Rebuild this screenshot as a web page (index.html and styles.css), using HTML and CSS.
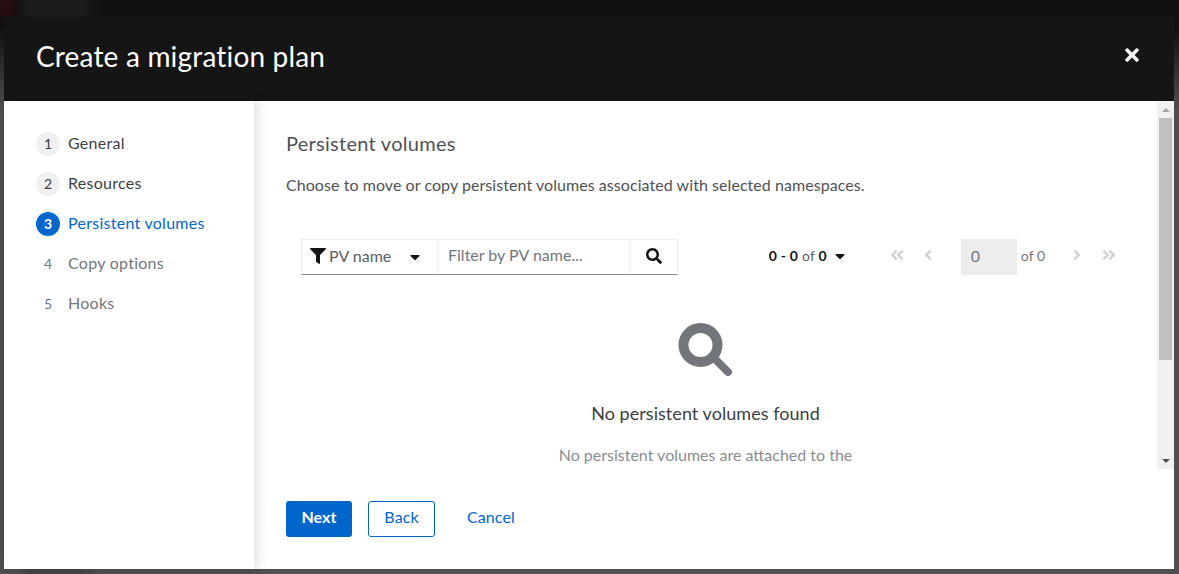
FILE: index.html
```html
<!DOCTYPE html>
<html lang="en">
<head>
<meta charset="utf-8">
<title>Create a migration plan</title>
<link rel="stylesheet" href="styles.css">
</head>
<body>
<div class="modal">
  <header class="modal-head">
    <h1 class="modal-title">Create a migration plan</h1>
    <svg class="close-icon" viewBox="0 0 352 512"><path d="M242.72 256l100.07-100.07c12.28-12.28 12.28-32.19 0-44.48l-22.24-22.24c-12.28-12.28-32.19-12.28-44.48 0L176 189.28 75.93 89.21c-12.28-12.28-32.19-12.28-44.48 0L9.21 111.45c-12.28 12.28-12.28 32.19 0 44.48L109.28 256 9.21 356.07c-12.28 12.28-12.28 32.19 0 44.48l22.24 22.24c12.28 12.28 32.2 12.28 44.48 0L176 322.72l100.07 100.07c12.28 12.28 32.2 12.28 44.48 0l22.24-22.24c12.28-12.28 12.28-32.19 0-44.48L242.72 256z"/></svg>
  </header>
  <div class="modal-body">
    <nav class="steps">
      <div class="step"><span class="step-num done">1</span><span class="step-label">General</span></div>
      <div class="step"><span class="step-num done">2</span><span class="step-label">Resources</span></div>
      <div class="step current"><span class="step-num">3</span><span class="step-label">Persistent volumes</span></div>
      <div class="step muted"><span class="step-num">4</span><span class="step-label">Copy options</span></div>
      <div class="step muted"><span class="step-num">5</span><span class="step-label">Hooks</span></div>
    </nav>
    <div class="main">
      <div class="scroll-row">
        <section class="content">
          <h2 class="page-title">Persistent volumes</h2>
          <p class="page-desc">Choose to move or copy persistent volumes associated with selected namespaces.</p>
          <div class="toolbar">
            <div class="filter">
              <div class="filter-select">
                <svg class="filter-icon" viewBox="0 0 512 512"><path d="M487.976 0H24.028C2.71 0-8.047 25.866 7.058 40.971L192 225.941V432c0 7.831 3.821 15.17 10.237 19.662l80 55.98C298.02 518.69 320 507.493 320 487.98V225.941l184.947-184.97C520.021 25.896 509.338 0 487.976 0z"/></svg>
                <span class="filter-label">PV name</span>
                <svg class="caret" viewBox="0 0 320 512"><path d="M31.3 192h257.3c17.8 0 26.7 21.5 14.1 34.1L174.1 354.8c-7.8 7.8-20.5 7.8-28.3 0L17.2 226.1C4.6 213.5 13.5 192 31.3 192z"/></svg>
              </div>
              <div class="filter-input">Filter by PV name...</div>
              <div class="filter-btn">
                <svg class="search-small" viewBox="0 0 512 512"><path d="M505 442.7L405.3 343c-4.5-4.5-10.6-7-17-7H372c27.6-35.3 44-79.7 44-128C416 93.1 322.9 0 208 0S0 93.1 0 208s93.1 208 208 208c48.3 0 92.7-16.4 128-44v16.3c0 6.4 2.5 12.5 7 17l99.7 99.7c9.4 9.4 24.6 9.4 33.9 0l28.3-28.3c9.4-9.4 9.4-24.6.1-34zM208 336c-70.7 0-128-57.2-128-128 0-70.7 57.2-128 128-128 70.7 0 128 57.2 128 128 0 70.7-57.2 128-128 128z"/></svg>
              </div>
            </div>
            <div class="pager">
              <span class="pager-count"><b>0 - 0</b> of <b>0</b></span>
              <svg class="caret pager-caret" viewBox="0 0 320 512"><path d="M31.3 192h257.3c17.8 0 26.7 21.5 14.1 34.1L174.1 354.8c-7.8 7.8-20.5 7.8-28.3 0L17.2 226.1C4.6 213.5 13.5 192 31.3 192z"/></svg>
              <svg class="nav-icon first" viewBox="0 0 448 512"><path d="M223.7 239l136-136c9.4-9.4 24.6-9.4 33.9 0l22.6 22.6c9.4 9.4 9.4 24.6 0 33.9L319.9 256l96.4 96.4c9.4 9.4 9.4 24.6 0 33.9L393.7 409c-9.4 9.4-24.6 9.4-33.9 0l-136-136c-9.5-9.4-9.5-24.6-.1-34zm-192 34l136 136c9.4 9.4 24.6 9.4 33.9 0l22.6-22.6c9.4-9.4 9.4-24.6 0-33.9L127.9 256l96.4-96.4c9.4-9.4 9.4-24.6 0-33.9L201.7 103c-9.4-9.4-24.6-9.4-33.9 0l-136 136c-9.5 9.4-9.5 24.6-.1 34z"/></svg>
              <svg class="nav-icon single prev" viewBox="0 0 256 512"><path d="M31.7 239l136-136c9.4-9.4 24.6-9.4 33.9 0l22.6 22.6c9.4 9.4 9.4 24.6 0 33.9L127.9 256l96.4 96.4c9.4 9.4 9.4 24.6 0 33.9L201.7 409c-9.4 9.4-24.6 9.4-33.9 0l-136-136c-9.5-9.4-9.5-24.6-.1-34z"/></svg>
              <span class="page-input">0</span>
              <span class="page-of">of 0</span>
              <svg class="nav-icon single next" viewBox="0 0 256 512"><path d="M224.3 273l-136 136c-9.4 9.4-24.6 9.4-33.9 0l-22.6-22.6c-9.4-9.4-9.4-24.6 0-33.9l96.4-96.4-96.4-96.4c-9.4-9.4-9.4-24.6 0-33.9L54.3 103c9.4-9.4 24.6-9.4 33.9 0l136 136c9.5 9.4 9.5 24.6.1 34z"/></svg>
              <svg class="nav-icon last" viewBox="0 0 448 512"><path d="M224.3 273l-136 136c-9.4 9.4-24.6 9.4-33.9 0l-22.6-22.6c-9.4-9.4-9.4-24.6 0-33.9l96.4-96.4-96.4-96.4c-9.4-9.4-9.4-24.6 0-33.9L54.3 103c9.4-9.4 24.6-9.4 33.9 0l136 136c9.5 9.4 9.5 24.6.1 34zm192-34l-136-136c-9.4-9.4-24.6-9.4-33.9 0l-22.6 22.6c-9.4 9.4-9.4 24.6 0 33.9l96.4 96.4-96.4 96.4c-9.4 9.4-9.4 24.6 0 33.9l22.6 22.6c9.4 9.4 24.6 9.4 33.9 0l136-136c9.4-9.2 9.4-24.4 0-33.8z"/></svg>
            </div>
          </div>
          <div class="empty">
            <svg class="empty-icon" viewBox="0 0 56 56"><circle cx="22.5" cy="23" r="17"/><path d="M36 36 L50 50"/></svg>
            <h3 class="empty-title">No persistent volumes found</h3>
            <p class="empty-text">No persistent volumes are attached to the</p>
          </div>
        </section>
        <div class="scrollbar">
          <div class="sb-btn"><span class="arrow-up"></span></div>
          <div class="sb-track"><div class="sb-thumb"></div></div>
          <div class="sb-btn"><span class="arrow-down"></span></div>
        </div>
      </div>
      <footer class="actions">
        <button class="btn primary">Next</button>
        <button class="btn secondary">Back</button>
        <button class="btn link">Cancel</button>
      </footer>
    </div>
  </div>
</div>
</body>
</html>
```

FILE: styles.css
```css
* { box-sizing: border-box; }
html, body { margin: 0; height: 574px; overflow: hidden; }
body {
  padding: 17px 5px 5px 4px;
  font-family: "Lato", "Noto Sans", sans-serif;
  font-size: 16px;
  color: #151515;
  background:
    radial-gradient(ellipse 16px 20px at 6px 6px, rgba(60, 12, 12, .7), transparent),
    linear-gradient(to right, transparent 15px, rgba(50, 50, 50, .35) 30px, rgba(50, 50, 50, .35) 80px, transparent 100px),
    linear-gradient(to bottom, #101010 0, #101010 28px, #4f4f4f 110px, #4f4f4f 100%);
}
.modal { height: 552px; display: flex; flex-direction: column; background: #fff; }
.modal-head {
  height: 84px; flex: none; background: #151515; color: #fff;
  display: flex; align-items: center; justify-content: space-between;
  padding: 0 35px 8px 32px;
}
.modal-title { margin: 0; font-size: 28px; font-weight: 400; line-height: 36px; letter-spacing: .18px; position: relative; top: 1px; }
.close-icon { width: 14px; height: 20px; fill: #f2f2f2; display: block; }
.modal-body { flex: 1; display: flex; min-height: 0; }
.steps {
  width: 250px; flex: none; padding: 23px 0 0 32px;
  box-shadow: 3px 0 12px rgba(0, 0, 0, .14);
  position: relative; z-index: 1; background: #fff;
}
.step { height: 40px; display: flex; align-items: center; gap: 8px; font-size: 16px; letter-spacing: .27px; color: #3c3f42; }
.step-label { padding-bottom: 4px; }
.step-num { width: 24px; height: 24px; border-radius: 50%; display: flex; align-items: center; justify-content: center; font-size: 14px; flex: none; letter-spacing: 0; padding-bottom: 2px; }
.step-num.done { background: #f0f0f0; }
.step.current { color: #0066cc; }
.step.current .step-num { background: #0066cc; color: #fff; font-weight: 700; }
.step.muted { color: #72767b; }
.main { flex: 1; min-width: 0; display: flex; flex-direction: column; }
.scroll-row { height: 368px; flex: none; display: flex; }
.content { flex: 1; min-width: 0; overflow: hidden; padding: 28px 32px 0; }
.page-title { margin: 0; font-size: 20px; font-weight: 400; line-height: 28px; color: #4f5255; letter-spacing: .27px; }
.page-desc { margin: 16px 0 0; font-size: 16px; line-height: 24px; color: #4f5255; letter-spacing: .06px; white-space: nowrap; }
.toolbar { display: flex; align-items: flex-start; justify-content: space-between; margin: 42px 0 0 15px; padding-right: 9px; }
.filter { display: flex; width: 377px; height: 36px; border: 1px solid #ededed; border-bottom-color: #8a8d90; }
.filter-select { width: 137px; display: flex; align-items: center; padding: 0 0 3px 8px; border-right: 1px solid #ededed; flex: none; }
.filter-icon { width: 16px; height: 16px; fill: #151515; flex: none; }
.filter-label { margin-left: 3px; color: #5a5e62; }
.caret { width: 10px; height: 16px; fill: #151515; flex: none; }
.filter-select .caret { margin: 3px 18px 0 auto; }
.filter-input { flex: 1; display: flex; align-items: center; padding: 0 0 5px 9px; color: #72767b; white-space: nowrap; }
.filter-btn { width: 47px; flex: none; display: flex; align-items: center; justify-content: center; padding-bottom: 3px; border-left: 1px solid #ededed; }
.search-small { width: 16px; height: 16px; fill: #151515; }
.pager { display: flex; align-items: center; height: 36px; font-size: 14px; }
.pager > * { margin-bottom: 4px; }
.pager-count { color: #5a5e62; letter-spacing: .2px; }
.pager-count b { font-weight: 700; color: #151515; }
.pager > .pager-caret { margin-left: 8px; margin-bottom: 2px; }
.nav-icon { height: 16px; fill: #d2d2d2; flex: none; }
.nav-icon.first, .nav-icon.last { width: 14px; }
.nav-icon.single { width: 8px; }
.first { margin-left: 45px; }
.prev { margin-left: 20px; }
.pager > .page-input { width: 56px; height: 36px; margin: 0 0 0 29px; background: #ededed; color: #72767b; font-size: 16px; display: flex; align-items: center; padding: 0 0 4px 10px; }
.page-of { margin-left: 4px; color: #72767b; }
.next { margin-left: 28px; }
.last { margin-left: 21px; }
.empty { display: flex; flex-direction: column; align-items: center; margin-top: 47px; }
.empty-icon { width: 56px; height: 56px; fill: none; stroke: #72767b; display: block; }
.empty-icon circle { stroke-width: 10; }
.empty-icon path { stroke-width: 8; stroke-linecap: round; }
.empty-title { margin: 21px 0 0; font-size: 18px; font-weight: 400; line-height: 28px; letter-spacing: .05px; color: #3c3f42; }
.empty-text { margin: 16px 0 0; line-height: 24px; color: #8a8d90; white-space: nowrap; }
.scrollbar { width: 17px; flex: none; background: #f1f1f1; display: flex; flex-direction: column; }
.sb-btn { height: 17px; display: flex; align-items: center; justify-content: center; flex: none; }
.arrow-up { border: 4px solid transparent; border-top: 0; border-bottom: 4px solid #a3a3a3; }
.arrow-down { border: 4px solid transparent; border-bottom: 0; border-top: 4px solid #505050; }
.sb-track { flex: 1; padding: 0 2px; }
.sb-thumb { height: 242px; background: #c1c1c1; }
.actions { display: flex; align-items: flex-start; padding: 32px 0 0 32px; }
.btn { height: 36px; font: inherit; border-radius: 3px; padding: 0 16px 5px; border: 1px solid transparent; background: none; letter-spacing: .1px; }
.primary { background: #0066cc; color: #fff; font-weight: 700; width: 66px; padding: 0 0 5px; }
.secondary { margin-left: 16px; border-color: #0066cc; color: #0066cc; width: 67px; padding: 0 0 5px; }
.link { margin-left: 15px; color: #0066cc; }
```
